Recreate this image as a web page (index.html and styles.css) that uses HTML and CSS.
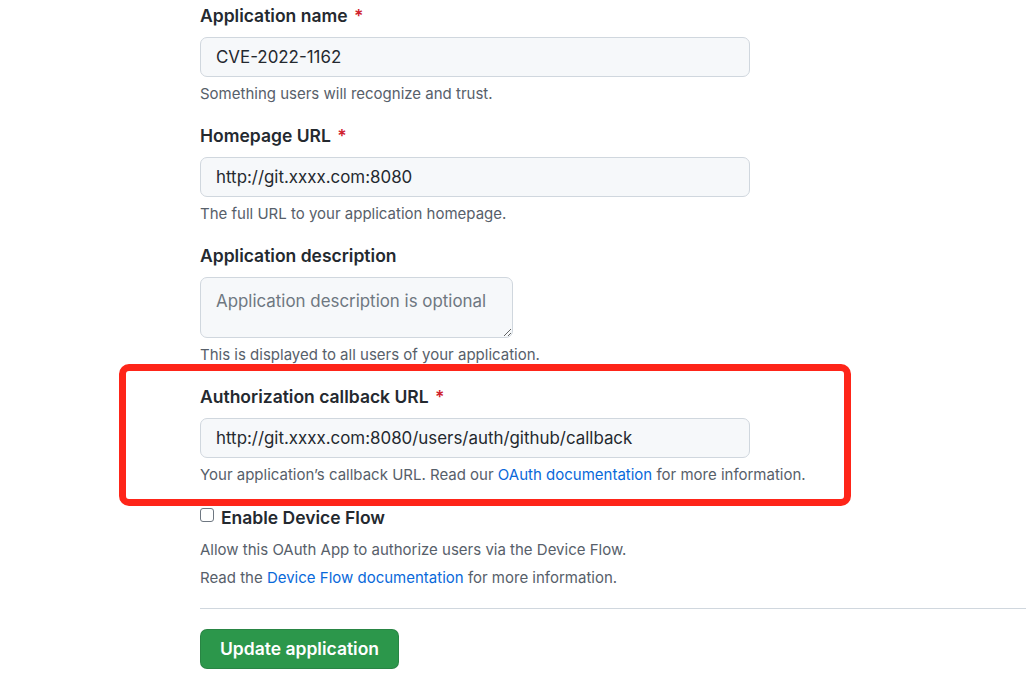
FILE: index.html
```html
<!DOCTYPE html>
<html>
<head>
<meta charset="utf-8">
<link rel="stylesheet" href="styles.css">
</head>
<body>
<form class="form">
  <div class="group">
    <label class="label">Application name <span class="req">*</span></label>
    <input class="input" type="text" value="CVE-2022-1162">
    <p class="note">Something users will recognize and trust.</p>
  </div>
  <div class="group">
    <label class="label">Homepage URL <span class="req">*</span></label>
    <input class="input" type="text" value="http://git.xxxx.com:8080">
    <p class="note">The full URL to your application homepage.</p>
  </div>
  <div class="group">
    <label class="label">Application description</label>
    <textarea class="textarea" placeholder="Application description is optional"></textarea>
    <p class="note">This is displayed to all users of your application.</p>
  </div>
  <div class="group highlighted">
    <label class="label">Authorization callback URL <span class="req">*</span></label>
    <input class="input" type="text" value="http://git.xxxx.com:8080/users/auth/github/callback">
    <p class="note">Your application’s callback URL. Read our <a class="link" href="#">OAuth documentation</a> for more information.</p>
    <div class="redbox"></div>
  </div>
  <div class="check-group">
    <label class="check-label"><span class="checkbox"></span>Enable Device Flow</label>
    <p class="note first">Allow this OAuth App to authorize users via the Device Flow.</p>
    <p class="note second">Read the <a class="link" href="#">Device Flow documentation</a> for more information.</p>
  </div>
  <hr class="divider">
  <button class="btn" type="button">Update application</button>
</form>
</body>
</html>
```
FILE: styles.css
```css
html, body {
  margin: 0;
  padding: 0;
  background: #ffffff;
}
body {
  font-family: Inter, "Liberation Sans", sans-serif;
  color: #24292f;
}
.form {
  margin-left: 200px;
  width: 826px;
  padding-top: 2.5px;
}
.group {
  display: flex;
  flex-direction: column;
  align-items: flex-start;
  margin-bottom: 20.3px;
  position: relative;
}
.label {
  font-size: 17.5px;
  font-weight: 600;
  line-height: 25px;
  height: 25px;
  margin-bottom: 9px;
  color: #24292f;
}
.req {
  color: #cf222e;
  margin-left: 2px;
}
.input {
  box-sizing: border-box;
  width: 550px;
  height: 40px;
  padding: 0 15px;
  font-family: inherit;
  font-size: 16.9px;
  color: #24292f;
  background: #f6f8fa;
  border: 1px solid #d0d7de;
  border-radius: 7px;
  outline: none;
  margin: 0;
}
.textarea {
  box-sizing: border-box;
  width: 313px;
  height: 61px;
  padding: 11px 15px;
  font-family: inherit;
  font-size: 16.9px;
  line-height: 25px;
  color: #24292f;
  background: #f6f8fa;
  border: 1px solid #d0d7de;
  border-radius: 7px;
  outline: none;
  margin: 0;
  resize: both;
}
.textarea::placeholder {
  color: #6e7781;
}
.note {
  margin: 7px 0 0;
  font-size: 15px;
  line-height: 19px;
  color: #57606a;
}
.link {
  color: #0969da;
  text-decoration: none;
}
.redbox {
  position: absolute;
  left: -81px;
  top: -20px;
  width: 732px;
  height: 142px;
  box-sizing: border-box;
  border: 7px solid #fe2519;
  border-radius: 10px;
  pointer-events: none;
}
.check-group {
  display: flex;
  flex-direction: column;
  align-items: flex-start;
}
.check-label {
  display: flex;
  align-items: center;
  font-size: 17.5px;
  font-weight: 600;
  line-height: 25px;
  color: #24292f;
}
.checkbox {
  box-sizing: border-box;
  width: 14px;
  height: 14px;
  border: 1px solid #6e7781;
  border-radius: 3px;
  background: #fff;
  margin-right: 7px;
  margin-top: -5px;
}
.note.first {
  margin-top: 10px;
}
.note.second {
  margin-top: 9px;
}
.divider {
  margin: 21px 0 20px;
  border: 0;
  border-top: 1px solid #d0d7de;
  height: 0;
}
.btn {
  box-sizing: border-box;
  width: 199px;
  height: 40px;
  padding: 0;
  white-space: nowrap;
  text-align: center;
  font-family: inherit;
  font-size: 17.5px;
  font-weight: 600;
  color: #ffffff;
  background: #2c974b;
  border: 1px solid rgba(27, 31, 36, 0.15);
  border-radius: 7px;
  cursor: pointer;
}
```
